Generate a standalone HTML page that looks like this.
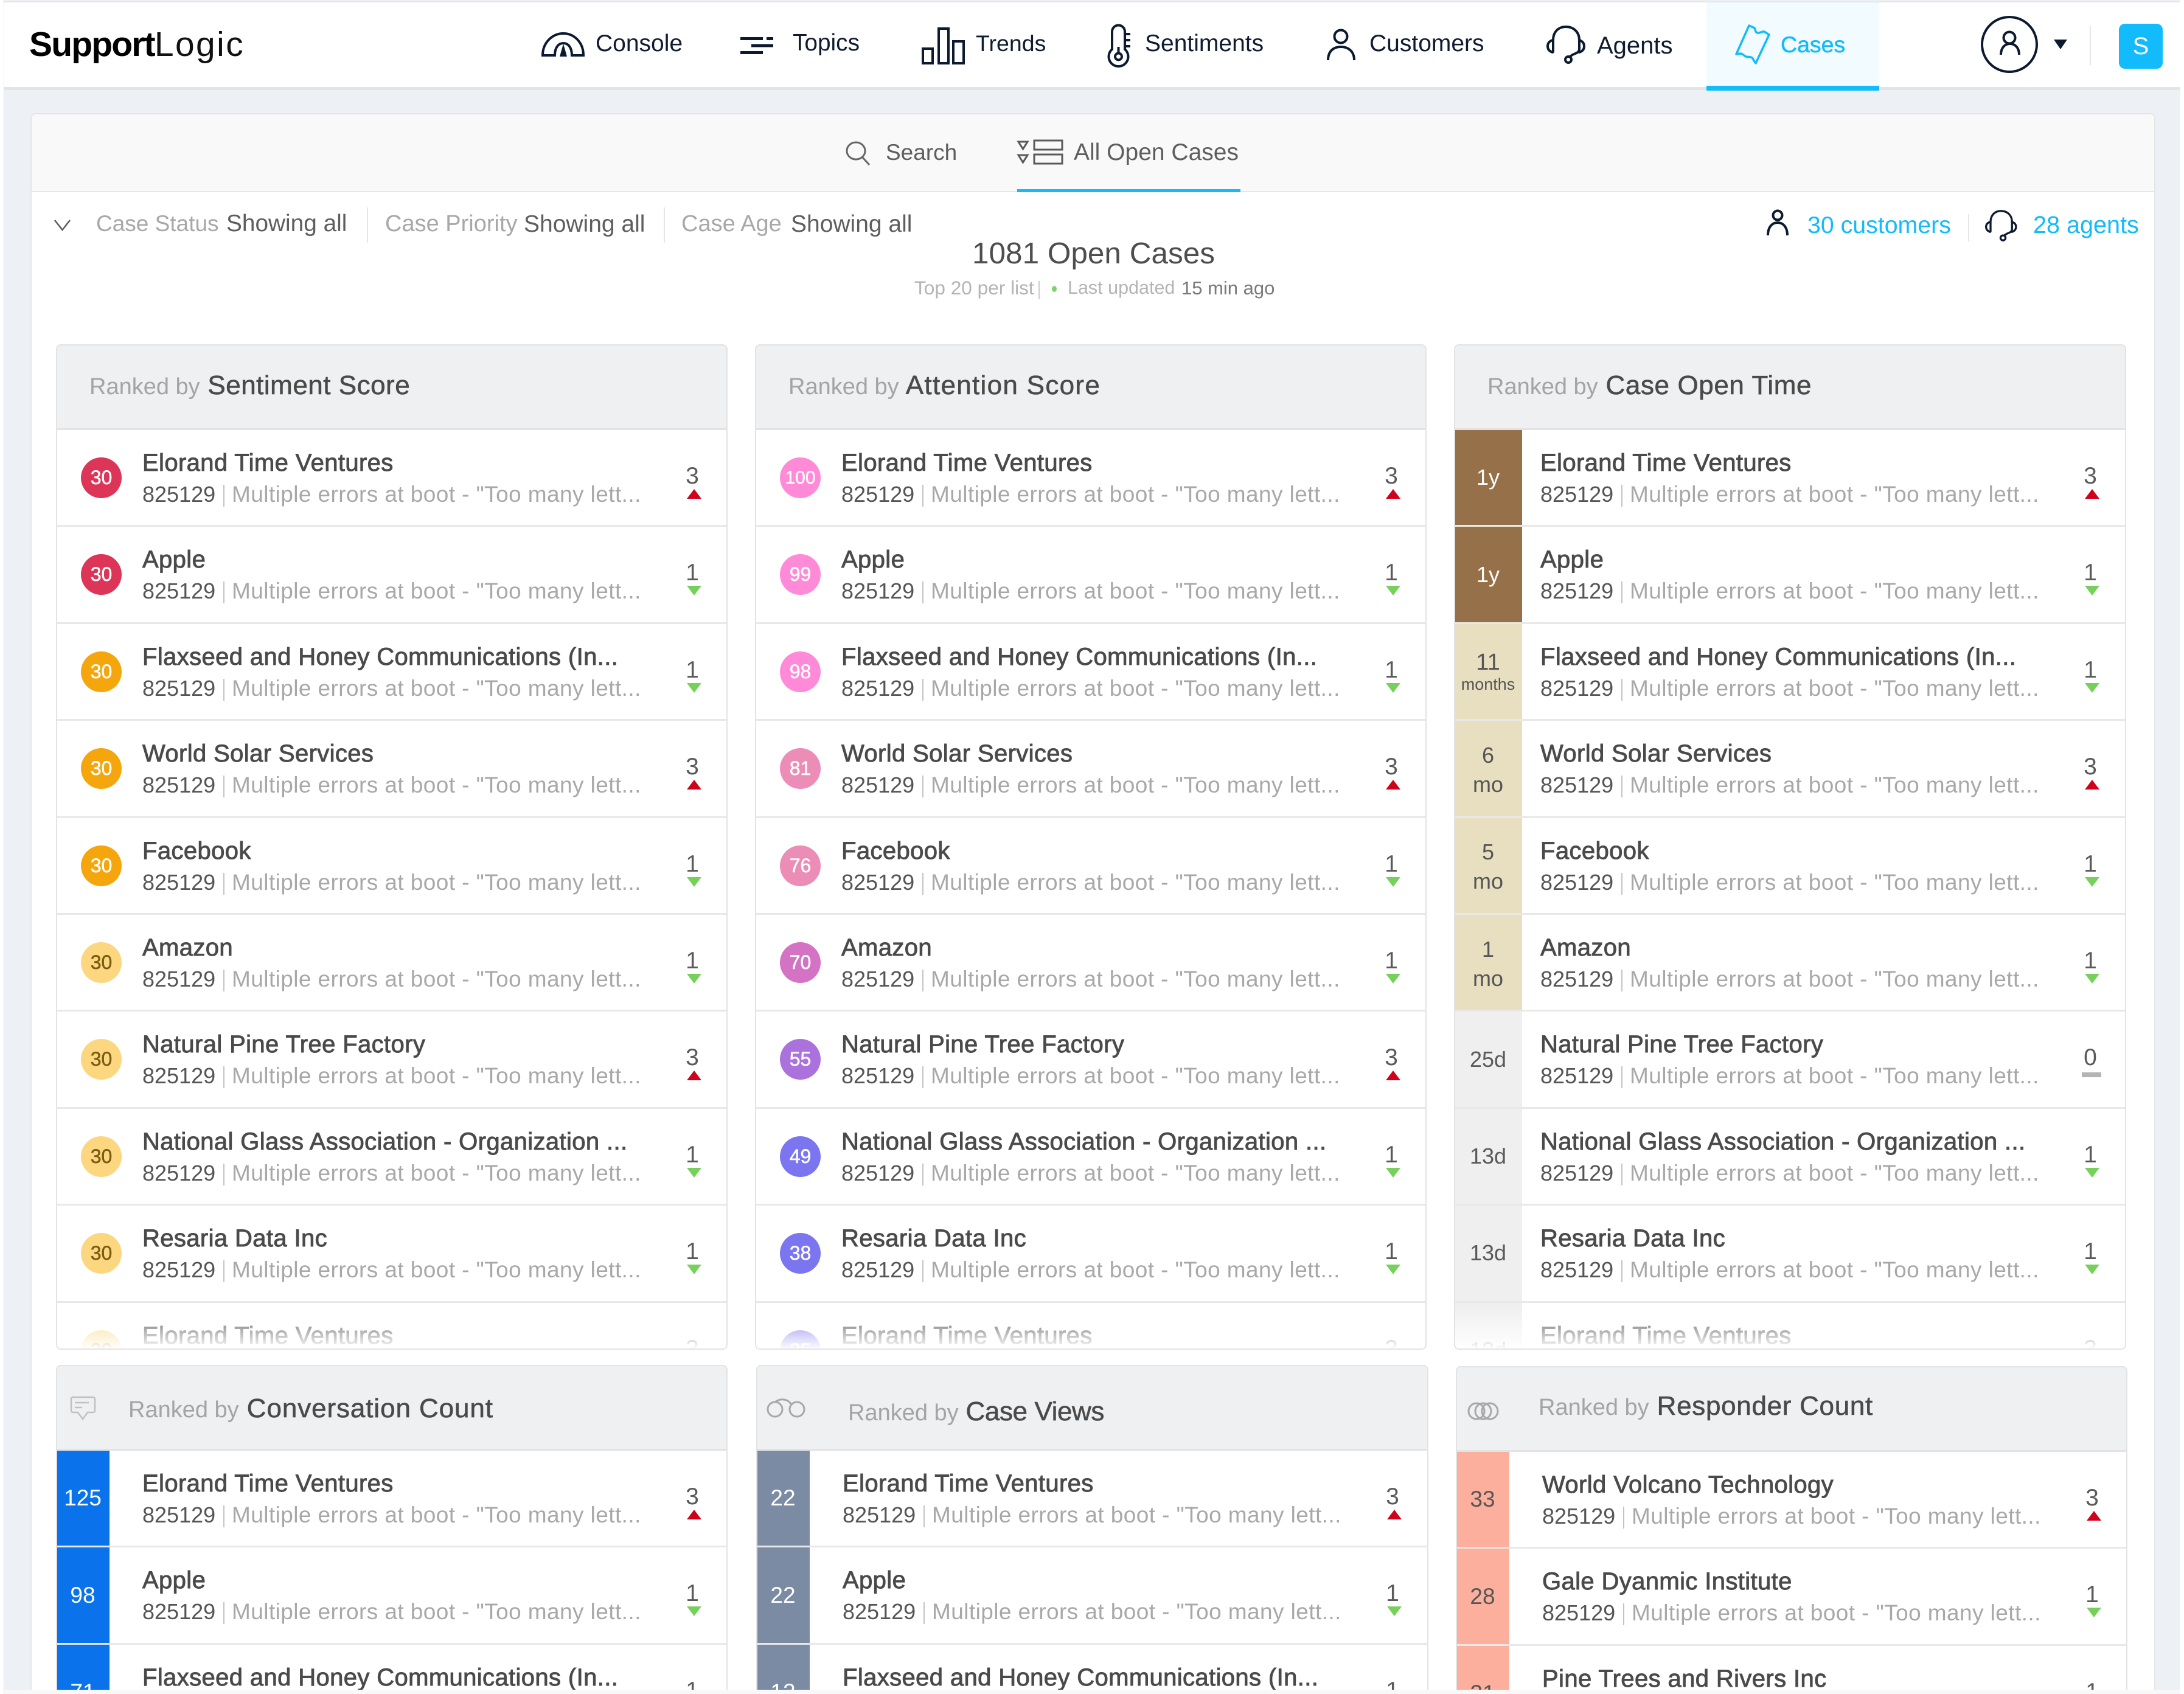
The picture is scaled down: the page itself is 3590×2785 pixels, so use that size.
<!DOCTYPE html>
<html><head><meta charset="utf-8"><title>SupportLogic</title>
<style>
html,body{margin:0;padding:0;background:#f8f8f8}
body{width:3590px;height:2785px;position:relative;overflow:hidden;font-family:"Liberation Sans",sans-serif;color:#4a4a4a}
#page{position:absolute;left:6px;top:0;width:3578px;height:2778px;overflow:hidden;background:#edf0f4}
#wrap{position:absolute;left:-6px;top:0;width:3590px;height:2778px}
.a{position:absolute;white-space:nowrap;line-height:1}
.nav{background:#fff;position:absolute;left:0;top:4px;width:3590px;height:139px}
.navsh{position:absolute;left:0;top:143px;width:3590px;height:5px;background:#e4e4e4}
.navt{font-size:39px;color:#0f1c30}
.panel{position:absolute;left:50px;top:186px;width:3493px;height:2700px;background:#fff;border:2px solid #e6e6e6;box-sizing:border-box;border-radius:8px 8px 0 0}
.tabbar{position:absolute;left:50px;top:186px;width:3493px;height:130px;background:#f9f9f9;border:2px solid #e6e6e6;border-top-color:#e4e4e4;box-sizing:border-box;border-radius:8px 8px 0 0}
.g{color:#a8a8a8}
.dk{color:#5e5e5e}
.vd{position:absolute;width:2px;background:#e6e6e6}
.c{position:absolute;background:#fff;overflow:hidden;border-radius:8px}
.c:after{content:"";position:absolute;left:0;top:0;right:0;bottom:0;border:2px solid #e3e3e3;border-radius:8px;z-index:5;pointer-events:none}
.h{position:absolute;left:0;top:0;width:100%;height:141px;background:#eff0f2;border-bottom:3px solid #e3e3e3;box-sizing:border-box}
.h .a{font-size:44px;color:#4a4a4a;letter-spacing:.5px;-webkit-text-stroke:.6px #4a4a4a}
.h .a span{font-size:38px;color:#a4a4a4;letter-spacing:0;-webkit-text-stroke:0}
.l{position:absolute;left:0;top:141px;width:100%}
.r{position:relative;height:159.4px;box-sizing:border-box;border-bottom:3px solid #e8e8e8}
.n{position:absolute;left:142px;top:29px;font-size:40px;line-height:50px;white-space:nowrap;letter-spacing:.38px;color:#4a4a4a;-webkit-text-stroke:.9px #4a4a4a}
.d{position:absolute;left:142px;top:81px;font-size:36px;line-height:50px;color:#555}
.p{position:absolute;left:275px;top:90px;width:2px;height:36px;background:#c4c4c4}
.m{position:absolute;left:289px;top:81px;font-size:37px;line-height:50px;letter-spacing:.42px;white-space:nowrap;color:#a8a8a8}
.k{position:absolute;left:1021px;top:51px;width:50px;text-align:center;font-size:39px;line-height:50px;color:#5a5a5a}
.u,.w{position:absolute;left:1037px;top:97px;width:0;height:0;border-left:12.5px solid transparent;border-right:12.5px solid transparent}
.u{border-bottom:16px solid #d0021b}
.w{border-top:16px solid #78d05c}
.z{position:absolute;left:1032px;top:100px;width:32px;height:8px;background:#b4b4b4}
.b{position:absolute;left:41px;top:45px;width:67px;height:67px;border-radius:50%;color:#fff;font-size:32px;line-height:67px;text-align:center;-webkit-text-stroke:.5px currentColor}
.b.y{color:#7b5b12}
.v{position:absolute;left:0;top:0;width:112px;height:156.4px;display:flex;flex-direction:column;align-items:center;justify-content:center;font-size:36px;line-height:46px;text-align:center;box-sizing:border-box}
.v8{width:88px;color:#fff;font-size:37px}
.tw{padding-top:5px;line-height:48px}
.fade{position:absolute;left:0;bottom:0;width:100%;height:72px;background:linear-gradient(rgba(255,255,255,0),#fff);z-index:3}
svg.ic{position:absolute;left:0;top:0}
</style></head><body>
<div id="page"><div id="wrap">
<div class="nav"></div><div class="navsh"></div>
<div style="position:absolute;left:2805px;top:4px;width:284px;height:137px;background:#f2fbff"></div>
<div style="position:absolute;left:2805px;top:141px;width:284px;height:8px;background:#12bbfb"></div>

<div class="a" style="left:48px;top:44.6px;font-size:57px;color:#000"><span style="font-weight:700;letter-spacing:-1.8px">Support</span><span style="letter-spacing:2.4px;color:#111">Logic</span></div>
<div class="a navt" style="left:979px;top:51.5px">Console</div>
<div class="a navt" style="left:1303px;top:52px;font-size:38.8px">Topics</div>
<div class="a navt" style="left:1604px;top:52.5px;font-size:37.5px">Trends</div>
<div class="a navt" style="left:1882px;top:51.5px">Sentiments</div>
<div class="a navt" style="left:2251px;top:51.5px">Customers</div>
<div class="a navt" style="left:2625px;top:54.5px;font-size:40px">Agents</div>
<div class="a navt" style="left:2927px;top:55px;font-size:37.5px;color:#12bbfb;-webkit-text-stroke:.5px #12bbfb">Cases</div>
<div class="vd" style="left:3435px;top:43px;height:64px"></div>
<div style="position:absolute;left:3483px;top:39px;width:72px;height:74px;border-radius:10px;background:#12bbfb;color:#fff;font-size:40px;line-height:74px;text-align:center">S</div>

<div class="panel"></div>
<div class="tabbar"></div>
<div style="position:absolute;left:1672px;top:311px;width:367px;height:5px;background:#12bbfb"></div>
<div class="a dk" style="left:1456px;top:232px;font-size:37px">Search</div>
<div class="a dk" style="left:1765px;top:231px;font-size:39px">All Open Cases</div>

<div class="a" style="left:158px;top:349px;font-size:37px"><span class="g">Case Status</span></div>
<div class="a dk" style="left:372px;top:349px;font-size:38.8px">Showing all</div>
<div class="vd" style="left:603px;top:341px;height:58px"></div>
<div class="a g" style="left:633px;top:349px;font-size:38px">Case Priority</div>
<div class="a dk" style="left:861px;top:349px;font-size:39px">Showing all</div>
<div class="vd" style="left:1091px;top:341px;height:58px"></div>
<div class="a g" style="left:1120px;top:349px;font-size:38px">Case Age</div>
<div class="a dk" style="left:1300px;top:349px;font-size:39px">Showing all</div>

<div class="a" style="left:1598px;top:392px;font-size:49.5px;color:#4e4e4e">1081 Open Cases</div>
<div class="a" style="left:1503px;top:458px;font-size:31.6px;color:#b4b4b4">Top 20 per list</div>
<div class="vd" style="left:1707px;top:462px;height:30px;width:2px;background:#ccc"></div>
<div style="position:absolute;left:1729px;top:470px;width:8px;height:10px;border-radius:50%;background:#7ed36c"></div>
<div class="a" style="left:1755px;top:458px;font-size:30.5px;color:#b4b4b4">Last updated</div>
<div class="a" style="left:1942px;top:458px;font-size:31px;color:#7a7a7a">15 min ago</div>

<div class="a" style="left:2971px;top:351px;font-size:39.3px;color:#12bbfb">30 customers</div>
<div class="vd" style="left:3235px;top:352px;height:45px"></div>
<div class="a" style="left:3342px;top:351px;font-size:39.6px;color:#12bbfb">28 agents</div>

<!-- Sentiment Score -->
<div class="c" style="left:92px;top:566px;width:1104px;height:1653px">
<div class="h"><div class="a" style="left:55px;top:46px"><span>Ranked by</span> Sentiment Score</div></div>
<div class="l">
<div class="r"><div class="b" style="background:#dd3558">30</div><div class="n">Elorand Time Ventures</div><div class="d">825129</div><div class="p"></div><div class="m">Multiple errors at boot - "Too many lett...</div><div class="k">3</div><div class="u"></div></div>
<div class="r"><div class="b" style="background:#dd3558">30</div><div class="n">Apple</div><div class="d">825129</div><div class="p"></div><div class="m">Multiple errors at boot - "Too many lett...</div><div class="k">1</div><div class="w"></div></div>
<div class="r"><div class="b" style="background:#f5a60d">30</div><div class="n">Flaxseed and Honey Communications (In...</div><div class="d">825129</div><div class="p"></div><div class="m">Multiple errors at boot - "Too many lett...</div><div class="k">1</div><div class="w"></div></div>
<div class="r"><div class="b" style="background:#f5a60d">30</div><div class="n">World Solar Services</div><div class="d">825129</div><div class="p"></div><div class="m">Multiple errors at boot - "Too many lett...</div><div class="k">3</div><div class="u"></div></div>
<div class="r"><div class="b" style="background:#f5a60d">30</div><div class="n">Facebook</div><div class="d">825129</div><div class="p"></div><div class="m">Multiple errors at boot - "Too many lett...</div><div class="k">1</div><div class="w"></div></div>
<div class="r"><div class="b y" style="background:#fdd77f">30</div><div class="n">Amazon</div><div class="d">825129</div><div class="p"></div><div class="m">Multiple errors at boot - "Too many lett...</div><div class="k">1</div><div class="w"></div></div>
<div class="r"><div class="b y" style="background:#fdd77f">30</div><div class="n">Natural Pine Tree Factory</div><div class="d">825129</div><div class="p"></div><div class="m">Multiple errors at boot - "Too many lett...</div><div class="k">3</div><div class="u"></div></div>
<div class="r"><div class="b y" style="background:#fdd77f">30</div><div class="n">National Glass Association - Organization ...</div><div class="d">825129</div><div class="p"></div><div class="m">Multiple errors at boot - "Too many lett...</div><div class="k">1</div><div class="w"></div></div>
<div class="r"><div class="b y" style="background:#fdd77f">30</div><div class="n">Resaria Data Inc</div><div class="d">825129</div><div class="p"></div><div class="m">Multiple errors at boot - "Too many lett...</div><div class="k">1</div><div class="w"></div></div>
<div class="r"><div class="b y" style="background:#fdd77f">30</div><div class="n">Elorand Time Ventures</div><div class="k">3</div></div>
</div><div class="fade"></div></div>

<!-- Attention Score -->
<div class="c" style="left:1241px;top:566px;width:1104px;height:1653px">
<div class="h"><div class="a" style="left:55px;top:46px;letter-spacing:1.3px"><span>Ranked by</span> Attention Score</div></div>
<div class="l">
<div class="r"><div class="b" style="background:#ff8ad8;font-size:30px">100</div><div class="n">Elorand Time Ventures</div><div class="d">825129</div><div class="p"></div><div class="m">Multiple errors at boot - "Too many lett...</div><div class="k">3</div><div class="u"></div></div>
<div class="r"><div class="b" style="background:#ff8ad8">99</div><div class="n">Apple</div><div class="d">825129</div><div class="p"></div><div class="m">Multiple errors at boot - "Too many lett...</div><div class="k">1</div><div class="w"></div></div>
<div class="r"><div class="b" style="background:#ff8ad8">98</div><div class="n">Flaxseed and Honey Communications (In...</div><div class="d">825129</div><div class="p"></div><div class="m">Multiple errors at boot - "Too many lett...</div><div class="k">1</div><div class="w"></div></div>
<div class="r"><div class="b" style="background:#ec8db7">81</div><div class="n">World Solar Services</div><div class="d">825129</div><div class="p"></div><div class="m">Multiple errors at boot - "Too many lett...</div><div class="k">3</div><div class="u"></div></div>
<div class="r"><div class="b" style="background:#ec8db7">76</div><div class="n">Facebook</div><div class="d">825129</div><div class="p"></div><div class="m">Multiple errors at boot - "Too many lett...</div><div class="k">1</div><div class="w"></div></div>
<div class="r"><div class="b" style="background:#d472c4">70</div><div class="n">Amazon</div><div class="d">825129</div><div class="p"></div><div class="m">Multiple errors at boot - "Too many lett...</div><div class="k">1</div><div class="w"></div></div>
<div class="r"><div class="b" style="background:#ab72dd">55</div><div class="n">Natural Pine Tree Factory</div><div class="d">825129</div><div class="p"></div><div class="m">Multiple errors at boot - "Too many lett...</div><div class="k">3</div><div class="u"></div></div>
<div class="r"><div class="b" style="background:#7c75f0">49</div><div class="n">National Glass Association - Organization ...</div><div class="d">825129</div><div class="p"></div><div class="m">Multiple errors at boot - "Too many lett...</div><div class="k">1</div><div class="w"></div></div>
<div class="r"><div class="b" style="background:#7c75f0">38</div><div class="n">Resaria Data Inc</div><div class="d">825129</div><div class="p"></div><div class="m">Multiple errors at boot - "Too many lett...</div><div class="k">1</div><div class="w"></div></div>
<div class="r"><div class="b" style="background:#7c75f0">35</div><div class="n">Elorand Time Ventures</div><div class="k">3</div></div>
</div><div class="fade"></div></div>

<!-- Case Open Time -->
<div class="c" style="left:2390px;top:566px;width:1105px;height:1653px">
<div class="h"><div class="a" style="left:55px;top:46px;letter-spacing:.6px"><span>Ranked by</span> Case Open Time</div></div>
<div class="l">
<div class="r"><div class="v" style="background:#967049;color:#fff">1y</div><div class="n">Elorand Time Ventures</div><div class="d">825129</div><div class="p"></div><div class="m">Multiple errors at boot - "Too many lett...</div><div class="k">3</div><div class="u"></div></div>
<div class="r"><div class="v" style="background:#967049;color:#fff">1y</div><div class="n">Apple</div><div class="d">825129</div><div class="p"></div><div class="m">Multiple errors at boot - "Too many lett...</div><div class="k">1</div><div class="w"></div></div>
<div class="r"><div class="v" style="background:#e8dfc0;color:#555;line-height:36px;padding-top:7px"><div style="font-size:38px">11</div><div style="font-size:27px">months</div></div><div class="n">Flaxseed and Honey Communications (In...</div><div class="d">825129</div><div class="p"></div><div class="m">Multiple errors at boot - "Too many lett...</div><div class="k">1</div><div class="w"></div></div>
<div class="r"><div class="v tw" style="background:#e8dfc0;color:#555"><div>6</div><div>mo</div></div><div class="n">World Solar Services</div><div class="d">825129</div><div class="p"></div><div class="m">Multiple errors at boot - "Too many lett...</div><div class="k">3</div><div class="u"></div></div>
<div class="r"><div class="v tw" style="background:#e8dfc0;color:#555"><div>5</div><div>mo</div></div><div class="n">Facebook</div><div class="d">825129</div><div class="p"></div><div class="m">Multiple errors at boot - "Too many lett...</div><div class="k">1</div><div class="w"></div></div>
<div class="r"><div class="v tw" style="background:#e8dfc0;color:#555"><div>1</div><div>mo</div></div><div class="n">Amazon</div><div class="d">825129</div><div class="p"></div><div class="m">Multiple errors at boot - "Too many lett...</div><div class="k">1</div><div class="w"></div></div>
<div class="r"><div class="v" style="background:#efefef;color:#5a5a5a">25d</div><div class="n">Natural Pine Tree Factory</div><div class="d">825129</div><div class="p"></div><div class="m">Multiple errors at boot - "Too many lett...</div><div class="k">0</div><div class="z"></div></div>
<div class="r"><div class="v" style="background:#efefef;color:#5a5a5a">13d</div><div class="n">National Glass Association - Organization ...</div><div class="d">825129</div><div class="p"></div><div class="m">Multiple errors at boot - "Too many lett...</div><div class="k">1</div><div class="w"></div></div>
<div class="r"><div class="v" style="background:#efefef;color:#5a5a5a">13d</div><div class="n">Resaria Data Inc</div><div class="d">825129</div><div class="p"></div><div class="m">Multiple errors at boot - "Too many lett...</div><div class="k">1</div><div class="w"></div></div>
<div class="r"><div class="v" style="background:#efefef;color:#5a5a5a">13d</div><div class="n">Elorand Time Ventures</div><div class="k">3</div></div>
</div><div class="fade"></div></div>

<!-- Conversation Count -->
<div class="c" style="left:92px;top:2244px;width:1104px;height:620px">
<div class="h"><div class="a" style="left:119px;top:50px;letter-spacing:.9px"><span>Ranked by</span> Conversation Count</div></div>
<div class="l">
<div class="r"><div class="v v8" style="background:#0a72ea">125</div><div class="n">Elorand Time Ventures</div><div class="d">825129</div><div class="p"></div><div class="m">Multiple errors at boot - "Too many lett...</div><div class="k">3</div><div class="u"></div></div>
<div class="r"><div class="v v8" style="background:#0a72ea">98</div><div class="n">Apple</div><div class="d">825129</div><div class="p"></div><div class="m">Multiple errors at boot - "Too many lett...</div><div class="k">1</div><div class="w"></div></div>
<div class="r"><div class="v v8" style="background:#0a72ea">71</div><div class="n">Flaxseed and Honey Communications (In...</div><div class="k">1</div></div>
</div></div>

<!-- Case Views -->
<div class="c" style="left:1243px;top:2244px;width:1105px;height:620px">
<div class="h"><div class="a" style="left:151px;top:55px;letter-spacing:-.4px"><span>Ranked by</span> Case Views</div></div>
<div class="l">
<div class="r"><div class="v v8" style="background:#7a8ba3">22</div><div class="n">Elorand Time Ventures</div><div class="d">825129</div><div class="p"></div><div class="m">Multiple errors at boot - "Too many lett...</div><div class="k">3</div><div class="u"></div></div>
<div class="r"><div class="v v8" style="background:#7a8ba3">22</div><div class="n">Apple</div><div class="d">825129</div><div class="p"></div><div class="m">Multiple errors at boot - "Too many lett...</div><div class="k">1</div><div class="w"></div></div>
<div class="r"><div class="v v8" style="background:#7a8ba3">12</div><div class="n">Flaxseed and Honey Communications (In...</div><div class="k">1</div></div>
</div></div>

<!-- Responder Count -->
<div class="c" style="left:2393px;top:2246px;width:1104px;height:620px">
<div class="h"><div class="a" style="left:136px;top:44px;letter-spacing:.7px"><span>Ranked by</span> Responder Count</div></div>
<div class="l">
<div class="r"><div class="v v8" style="background:#fbaf9c;color:#555">33</div><div class="n">World Volcano Technology</div><div class="d">825129</div><div class="p"></div><div class="m">Multiple errors at boot - "Too many lett...</div><div class="k">3</div><div class="u"></div></div>
<div class="r"><div class="v v8" style="background:#fbaf9c;color:#555">28</div><div class="n">Gale Dyanmic Institute</div><div class="d">825129</div><div class="p"></div><div class="m">Multiple errors at boot - "Too many lett...</div><div class="k">1</div><div class="w"></div></div>
<div class="r"><div class="v v8" style="background:#fbaf9c;color:#555">21</div><div class="n">Pine Trees and Rivers Inc</div><div class="k">1</div></div>
</div></div>

<svg class="ic" width="3590" height="2778" viewBox="0 0 3590 2778" style="z-index:9" fill="none">
<g stroke="#0c1a30" stroke-width="4">
<!-- console -->
<path d="M892 91C892 70 908 55 926 55C944 55 959 70 959 91H940C940 78 934 71 926 71C918 71 912 78 912 91Z"/>
<path d="M926 72L932 93H920Z" fill="#0c1a30" stroke="none"/>
<!-- trends -->
<rect x="1517" y="80" width="16" height="24"/><rect x="1543" y="47" width="16" height="57"/><rect x="1567" y="68" width="17" height="36"/>
<!-- thermometer -->
<path d="M1828 81V52A10.500 10.500 0 0 1 1849 52V81A16 16 0 1 1 1828 81Z"/>
<path d="M1849 56H1858M1849 66H1858M1849 76H1858M1838.500 77V87"/>
<circle cx="1838.500" cy="93" r="5.500"/>
<!-- customers -->
<circle cx="2204" cy="60" r="10.500"/>
<path d="M2183 99C2183 84 2192 77 2204 77C2216 77 2226 84 2226 99"/>
<!-- agents -->
<g stroke-linecap="round">
<path d="M2553 85V66C2553 52 2562 44 2574 44C2586 44 2596 52 2596 66V80C2596 89 2586 87 2581 93"/>
<path d="M2552 66C2546 68 2544 72 2544 76C2544 80 2546 84 2552 86M2596 66C2602 68 2604 72 2604 76C2604 80 2602 84 2596 86"/>
<circle cx="2578" cy="98" r="5"/>
</g>
<!-- user -->
<circle cx="3303" cy="73" r="45"/>
<circle cx="3303" cy="62" r="9.500"/>
<path d="M3289 90C3289 78 3296 72 3304 72C3312 72 3319 78 3319 90"/>
<!-- small person -->
<circle cx="2922" cy="354" r="7.500"/>
<path d="M2906 387C2906 372 2914 366 2922 366C2930 366 2938 372 2938 387"/>
<!-- small headset -->
<g transform="translate(3263 346) scale(.82) translate(-2542 -43)" stroke-linecap="round">
<path d="M2553 85V66C2553 52 2562 44 2574 44C2586 44 2596 52 2596 66V80C2596 89 2586 87 2581 93"/>
<path d="M2552 66C2546 68 2544 72 2544 76C2544 80 2546 84 2552 86M2596 66C2602 68 2604 72 2604 76C2604 80 2602 84 2596 86"/>
<circle cx="2578" cy="98" r="5"/>
</g>
</g>
<!-- topics -->
<g fill="#0c1a30">
<rect x="1217" y="61" width="37" height="5"/><rect x="1260" y="61" width="11" height="5"/>
<rect x="1235" y="72.500" width="36" height="5"/><rect x="1217" y="84" width="37" height="5"/>
<path d="M3376 65H3398L3387 81Z"/>
</g>
<!-- cases -->
<path d="M2875 42L2884 46C2886 50 2885 53 2889 54C2893 55 2896 51 2900 52L2908 57L2886 104L2882 98C2881 95 2880 95 2878 94C2874 93 2870 94 2868 92C2865 90 2864 88 2861 88L2854 89Z" stroke="#12bbfb" stroke-width="3.500" stroke-linejoin="round"/>
<!-- search -->
<g stroke="#666" stroke-width="3">
<ellipse cx="1407" cy="248" rx="15" ry="14"/><path d="M1418 259L1429 271"/>
</g>
<!-- all open cases -->
<g stroke="#5a5a5a" stroke-width="3">
<rect x="1700" y="231" width="46" height="15"/><rect x="1700" y="254" width="46" height="15"/>
<path d="M1674 233H1689L1681.500 245ZM1674 255H1689L1681.500 267Z"/>
</g>
<!-- chevron -->
<path d="M90 362L102.500 378L115 362" stroke="#5a5a5a" stroke-width="2.500"/>
<!-- conversation -->
<path d="M120 2297H153A3 3 0 0 1 156 2300V2319A3 3 0 0 1 153 2322H144L136 2333L128 2322H120A3 3 0 0 1 117 2319V2300A3 3 0 0 1 120 2297Z M123 2306H146M123 2314H135" stroke="#c0c0c0" stroke-width="2.500"/>
<!-- views -->
<g stroke="#a8a8a8" stroke-width="3">
<circle cx="1274" cy="2317" r="12"/><circle cx="1310" cy="2317" r="12"/>
<path d="M1274 2305C1282 2299 1294 2299 1300 2308"/>
</g>
<!-- responder -->
<g stroke="#a8a8a8" stroke-width="3">
<circle cx="2427" cy="2320" r="13"/><circle cx="2438" cy="2320" r="13"/><circle cx="2449" cy="2320" r="13"/>
</g>
</svg>
</div></div>
<div style="position:absolute;left:0;top:2px;width:3590px;height:2px;background:#e8e8e8"></div>
<div style="position:absolute;left:3584px;top:0;width:6px;height:2785px;background:#fff"></div>
<div style="position:absolute;left:0;top:0;width:5px;height:2785px;background:#fff"></div>
</body></html>
